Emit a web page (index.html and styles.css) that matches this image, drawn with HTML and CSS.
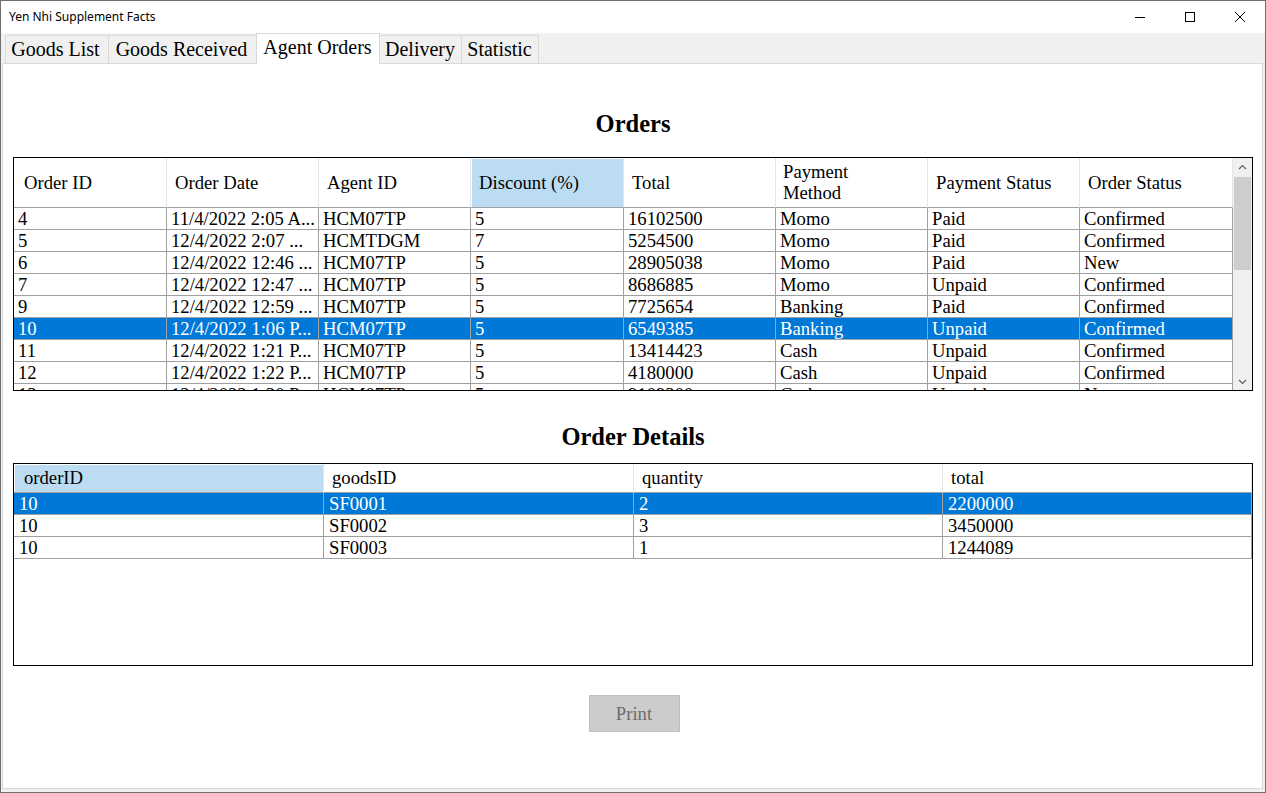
FILE: index.html
```html
<!DOCTYPE html>
<html>
<head>
<meta charset="utf-8">
<title>Yen Nhi Supplement Facts</title>
<link rel="stylesheet" href="styles.css">
</head>
<body>
<div class="window">
  <div class="titlebar">
    <div class="title">Yen Nhi Supplement Facts</div>
    <div class="controls">
      <div class="ctl"><svg width="10" height="10" viewBox="0 0 10 10"><path d="M0 5.5H10" stroke="#000" stroke-width="1"/></svg></div>
      <div class="ctl"><svg width="10" height="10" viewBox="0 0 10 10"><rect x="0.5" y="0.5" width="9" height="9" fill="none" stroke="#000" stroke-width="1"/></svg></div>
      <div class="ctl"><svg width="10" height="10" viewBox="0 0 10 10"><path d="M0 0L10 10M10 0L0 10" stroke="#000" stroke-width="1"/></svg></div>
    </div>
  </div>
  <div class="tabstrip">
    <div class="tab t1">Goods List</div>
    <div class="tab t2">Goods Received</div>
    <div class="tab t3 active">Agent Orders</div>
    <div class="tab t4">Delivery</div>
    <div class="tab t5">Statistic</div>
  </div>
  <div class="tabpage">
    <div class="heading h-orders">Orders</div>
    <div class="grid orders">
      <div class="grid-main">
        <div class="row head">
          <div class="hc first">Order ID</div>
          <div class="hc">Order Date</div>
          <div class="hc">Agent ID</div>
          <div class="hc sel-h">Discount (%)</div>
          <div class="hc">Total</div>
          <div class="hc wrap">Payment<br>Method</div>
          <div class="hc">Payment Status</div>
          <div class="hc">Order Status</div>
        </div>
        <div class="body orders-body">
          <div class="row"><div class="c">4</div><div class="c">11/4/2022 2:05 A...</div><div class="c">HCM07TP</div><div class="c">5</div><div class="c">16102500</div><div class="c">Momo</div><div class="c">Paid</div><div class="c">Confirmed</div></div>
          <div class="row"><div class="c">5</div><div class="c">12/4/2022 2:07 ...</div><div class="c">HCMTDGM</div><div class="c">7</div><div class="c">5254500</div><div class="c">Momo</div><div class="c">Paid</div><div class="c">Confirmed</div></div>
          <div class="row"><div class="c">6</div><div class="c">12/4/2022 12:46 ...</div><div class="c">HCM07TP</div><div class="c">5</div><div class="c">28905038</div><div class="c">Momo</div><div class="c">Paid</div><div class="c">New</div></div>
          <div class="row"><div class="c">7</div><div class="c">12/4/2022 12:47 ...</div><div class="c">HCM07TP</div><div class="c">5</div><div class="c">8686885</div><div class="c">Momo</div><div class="c">Unpaid</div><div class="c">Confirmed</div></div>
          <div class="row"><div class="c">9</div><div class="c">12/4/2022 12:59 ...</div><div class="c">HCM07TP</div><div class="c">5</div><div class="c">7725654</div><div class="c">Banking</div><div class="c">Paid</div><div class="c">Confirmed</div></div>
          <div class="row selected"><div class="c">10</div><div class="c">12/4/2022 1:06 P...</div><div class="c">HCM07TP</div><div class="c">5</div><div class="c">6549385</div><div class="c">Banking</div><div class="c">Unpaid</div><div class="c">Confirmed</div></div>
          <div class="row"><div class="c">11</div><div class="c">12/4/2022 1:21 P...</div><div class="c">HCM07TP</div><div class="c">5</div><div class="c">13414423</div><div class="c">Cash</div><div class="c">Unpaid</div><div class="c">Confirmed</div></div>
          <div class="row"><div class="c">12</div><div class="c">12/4/2022 1:22 P...</div><div class="c">HCM07TP</div><div class="c">5</div><div class="c">4180000</div><div class="c">Cash</div><div class="c">Unpaid</div><div class="c">Confirmed</div></div>
          <div class="row"><div class="c">13</div><div class="c">12/4/2022 1:30 P...</div><div class="c">HCM07TP</div><div class="c">5</div><div class="c">9109300</div><div class="c">Cash</div><div class="c">Unpaid</div><div class="c">New</div></div>
        </div>
      </div>
      <div class="vscroll">
        <div class="arrow"><svg width="9" height="6" viewBox="0 0 9 6"><path d="M1 5L4.5 1.5L8 5" fill="none" stroke="#606060" stroke-width="1.2"/></svg></div>
        <div class="track"><div class="thumb"></div></div>
        <div class="arrow"><svg width="9" height="6" viewBox="0 0 9 6"><path d="M1 1L4.5 4.5L8 1" fill="none" stroke="#606060" stroke-width="1.2"/></svg></div>
      </div>
    </div>

    <div class="heading h-details">Order Details</div>
    <div class="grid details">
      <div class="grid-main">
        <div class="row head">
          <div class="hc first sel-h">orderID</div>
          <div class="hc">goodsID</div>
          <div class="hc">quantity</div>
          <div class="hc">total</div>
        </div>
        <div class="body details-body">
          <div class="row selected"><div class="c">10</div><div class="c">SF0001</div><div class="c">2</div><div class="c">2200000</div></div>
          <div class="row"><div class="c">10</div><div class="c">SF0002</div><div class="c">3</div><div class="c">3450000</div></div>
          <div class="row"><div class="c">10</div><div class="c">SF0003</div><div class="c">1</div><div class="c">1244089</div></div>
        </div>
      </div>
    </div>

    <div class="actions"><button class="btn" type="button">Print</button></div>
  </div>
</div>
</body>
</html>
```

FILE: styles.css
```css
* { box-sizing: border-box; }
html, body { margin: 0; padding: 0; }
body {
  width: 1266px;
  height: 793px;
  overflow: hidden;
  font-family: "Liberation Serif", "Times New Roman", serif;
  background: #ffffff;
  color: #000;
}
.window {
  width: 1266px;
  height: 793px;
  border: 1px solid #6f6f6f;
  background: #f0f0f0;
  display: flex;
  flex-direction: column;
}
.titlebar {
  height: 32px;
  flex: 0 0 32px;
  background: #ffffff;
  display: flex;
  align-items: stretch;
  justify-content: space-between;
}
.title {
  font-family: "Noto Sans", "Open Sans", sans-serif;
  font-size: 12px;
  line-height: 32px;
  padding-left: 8px;
  color: #000;
}
.controls { display: flex; }
.ctl {
  width: 50px;
  height: 32px;
  display: flex;
  align-items: center;
  justify-content: center;
}
.ctl svg { display: block; }
.tabstrip {
  height: 30px;
  flex: 0 0 30px;
  display: flex;
  align-items: flex-end;
  padding-left: 4px;
  background: #f0f0f0;
  position: relative;
  z-index: 1;
}
.tab {
  height: 28px;
  border: 1px solid #d9d9d9;
  border-bottom: none;
  background: #f0f0f0;
  font-size: 20px;
  line-height: 27px;
  text-align: center;
  white-space: nowrap;
  margin-left: -1px;
  padding: 0 1px 0 0;
}
.tab.t1 { width: 104px; margin-left: 0; padding-right: 3px; }
.tab.t2 { width: 149px; padding-right: 2px; }
.tab.t3 { width: 124px; }
.tab.t4 { width: 83px; }
.tab.t5 { width: 78px; }
.tab.active {
  height: 31px;
  background: #ffffff;
  margin-bottom: -1px;
  line-height: 27px;
}
.tabpage {
  flex: 1 1 auto;
  margin: 0 2px 3px 1px;
  border: 1px solid #d9d9d9;
  background: #ffffff;
  display: flex;
  flex-direction: column;
  padding-left: 10px;
}
.heading {
  font-weight: bold;
  font-size: 24.5px;
  line-height: 30px;
  height: 30px;
  text-align: center;
  width: 1240px;
}
.h-orders { margin-top: 45px; margin-bottom: 18px; }
.h-details { margin-top: 31px; margin-bottom: 11px; }
.grid {
  width: 1240px;
  border: 1px solid #000;
  display: flex;
  background: #ffffff;
}
.orders { height: 234px; }
.details { height: 203px; }
.grid-main { flex: 1 1 auto; display: flex; flex-direction: column; overflow: hidden; }
.row {
  display: grid;
  height: 22px;
  flex: 0 0 22px;
  font-size: 18.67px;
  line-height: 22px;
}
.orders .row { grid-template-columns: 153px 152px 152px 153px 152px 152px 152px 153px; }
.details .row { grid-template-columns: 310px 310px 309px 309px; }
.c {
  border-right: 1px solid #a0a0a0;
  border-bottom: 1px solid #a0a0a0;
  padding-left: 4px;
  white-space: nowrap;
  overflow: hidden;
}
.details .c { padding-left: 5px; }
.row.selected { background: #0078d7; color: #ffffff; }
.row.head { background: #ffffff; }
.orders .row.head { height: 50px; flex: 0 0 50px; }
.details .row.head { height: 29px; flex: 0 0 29px; }
.hc {
  border-right: 1px solid #e5e5e5;
  border-bottom: 1px solid #a0a0a0;
  padding-left: 8px;
  display: flex;
  align-items: center;
  white-space: nowrap;
  line-height: 21px;
}
.hc.wrap { padding-left: 7px; padding-bottom: 2px; }
.details .hc { padding-bottom: 2px; }
.hc.first { padding-left: 10px; }
.hc.sel-h {
  background: #bcdcf4;
  box-shadow: inset 1px 1px 0 #ffffff;
}
.body { flex: 1 1 auto; overflow: hidden; display: flex; flex-direction: column; }
.vscroll {
  width: 19px;
  flex: 0 0 19px;
  background: #f0f0f0;
  display: flex;
  flex-direction: column;
}
.arrow {
  height: 17px;
  flex: 0 0 17px;
  display: flex;
  align-items: center;
  justify-content: center;
}
.arrow svg { display: block; }
.track { flex: 1 1 auto; padding: 2px 1px 0 1px; }
.thumb { height: 93px; background: #cdcdcd; }
.actions {
  width: 1240px;
  display: flex;
  justify-content: center;
  margin-top: 29px;
}
.btn {
  width: 91px;
  height: 37px;
  background: #cccccc;
  border: 1px solid #bfbfbf;
  color: #6d6d6d;
  font-family: "Liberation Serif", "Times New Roman", serif;
  font-size: 18.67px;
  padding: 0;
  margin-left: 2px;
}
```
